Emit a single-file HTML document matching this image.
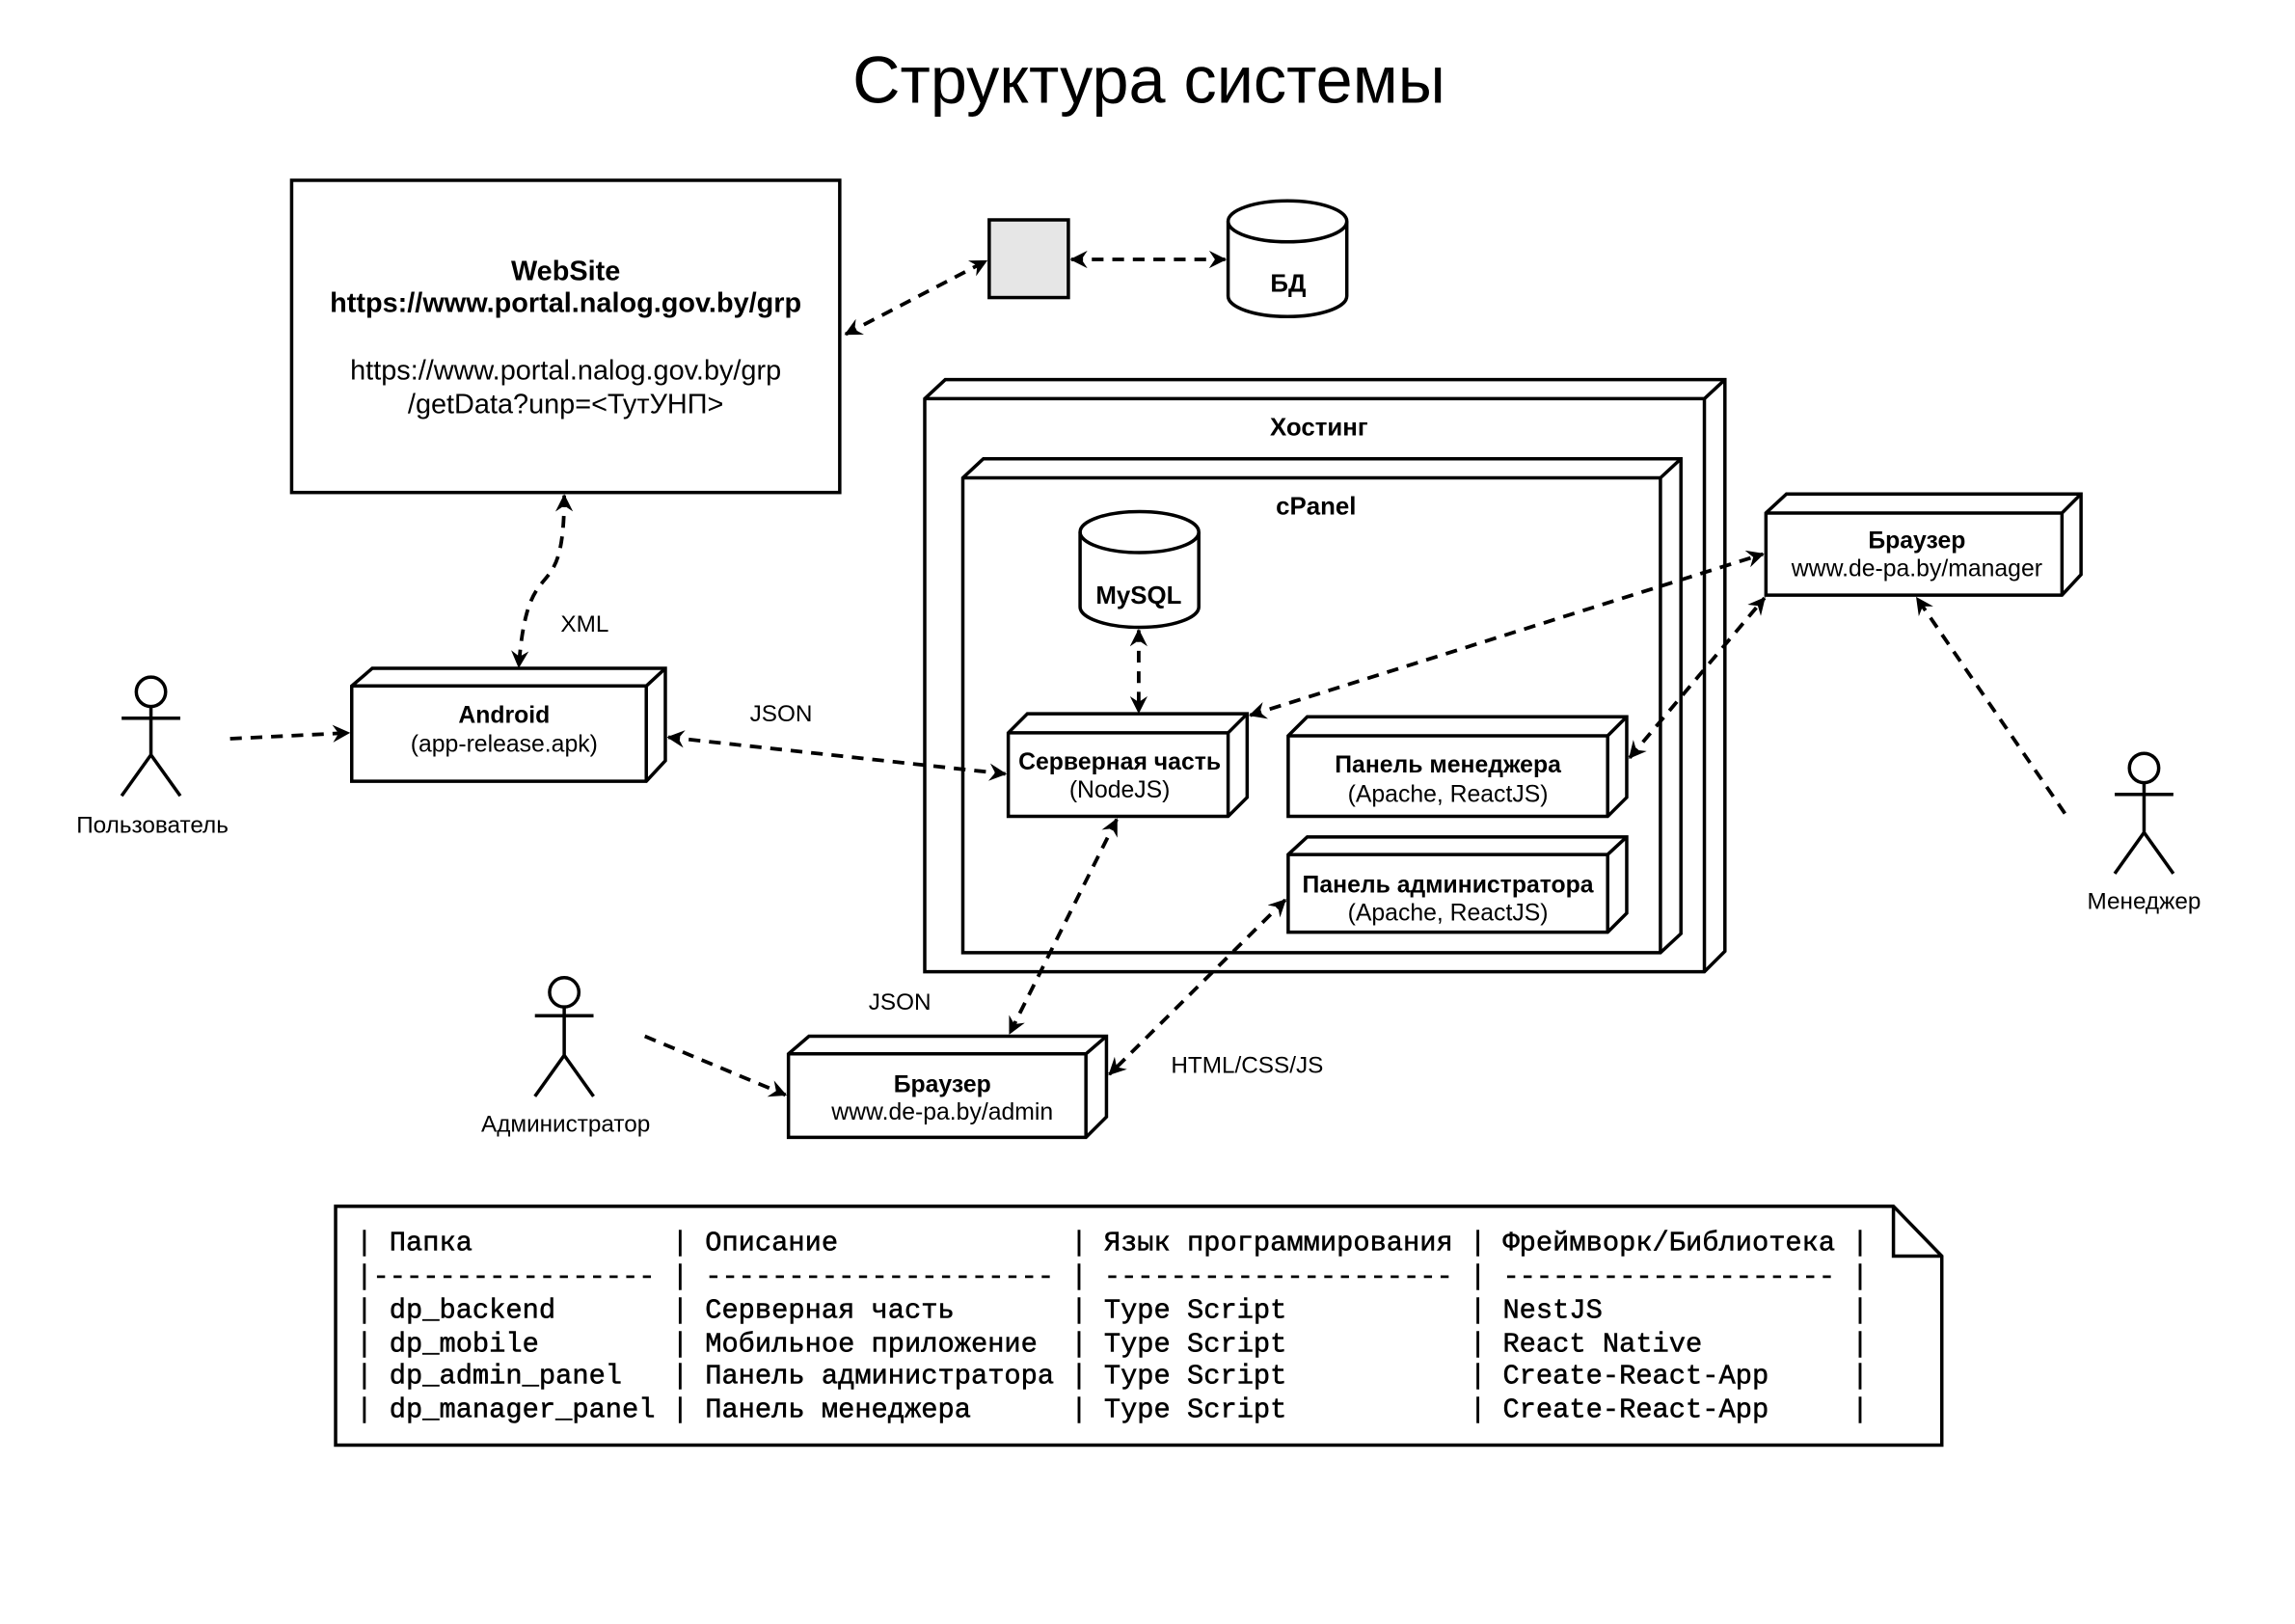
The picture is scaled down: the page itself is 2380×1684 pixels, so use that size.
<!DOCTYPE html>
<html><head><meta charset="utf-8"><style>html,body{margin:0;padding:0;background:#fff}svg{display:block}.pre{white-space:pre}</style></head>
<body>
<svg width="2380" height="1684" viewBox="0 0 1566 1108" xmlns="http://www.w3.org/2000/svg" font-family="'Liberation Sans', Arial, sans-serif">
<defs>
<marker id="a" viewBox="0 0 12 12" refX="11" refY="6" markerWidth="12" markerHeight="12" markerUnits="userSpaceOnUse" orient="auto-start-reverse">
<path d="M0,0 L12,6 L0,12 L4,6 z" fill="#000"/>
</marker>
</defs>
<rect width="1566" height="1108" fill="#fff"/>
<text x="784" y="70" font-size="45" text-anchor="middle">Структура системы</text>

<g fill="none" stroke="#000" stroke-width="2.3">
<rect x="199" y="123" width="374" height="213" fill="#fff"/>
<rect x="675" y="150" width="54" height="53" fill="#e6e6e6"/>
<path d="M838,151 A40.5,14 0 0 1 919,151 L919,202 A40.5,14 0 0 1 838,202 Z" fill="#fff"/>
<path d="M838,151 A40.5,14 0 0 0 919,151"/>
<path d="M631,272 L645,259 L1177,259 L1177,649 L1163,663 L631,663 Z" fill="#fff"/>
<path d="M631,272 L1163,272 L1163,663 M1163,272 L1177,259"/>
<path d="M657,326 L671,313 L1147,313 L1147,637 L1133,650 L657,650 Z" fill="#fff"/>
<path d="M657,326 L1133,326 L1133,650 M1133,326 L1147,313"/>
<path d="M737,363 A40.5,14 0 0 1 818,363 L818,414 A40.5,14 0 0 1 737,414 Z" fill="#fff"/>
<path d="M737,363 A40.5,14 0 0 0 818,363"/>
</g>

<g fill="#fff" stroke="#000" stroke-width="2.3">
<path d="M688,500 L701,487 L851,487 L851,544 L838,557 L688,557 Z"/>
<path d="M688,500 L838,500 L838,557 M838,500 L851,487" fill="none"/>
<path d="M879,502 L892,489 L1110,489 L1110,544 L1097,557 L879,557 Z"/>
<path d="M879,502 L1097,502 L1097,557 M1097,502 L1110,489" fill="none"/>
<path d="M879,583 L892,571 L1110,571 L1110,623 L1097,636 L879,636 Z"/>
<path d="M879,583 L1097,583 L1097,636 M1097,583 L1110,571" fill="none"/>
<path d="M1205,350 L1219,337 L1420,337 L1420,392 L1407,406 L1205,406 Z"/>
<path d="M1205,350 L1407,350 L1407,406 M1407,350 L1420,337" fill="none"/>
<path d="M240,468 L254,456 L454,456 L454,519 L441,533 L240,533 Z"/>
<path d="M240,468 L441,468 L441,533 M441,468 L454,456" fill="none"/>
<path d="M538,719 L552,707 L755,707 L755,762 L741,776 L538,776 Z"/>
<path d="M538,719 L741,719 L741,776 M741,719 L755,707" fill="none"/>
</g>

<g fill="none" stroke="#000" stroke-width="2.3">
<circle cx="103" cy="472" r="10"/><path d="M83,490 H123 M103,482 V515 L83,543 M103,515 L123,543"/>
<circle cx="385" cy="677" r="10"/><path d="M365,693 H405 M385,687 V720 L365,748 M385,720 L405,748"/>
<circle cx="1463" cy="524" r="10"/><path d="M1443,542 H1483 M1463,534 V568 L1443,596 M1463,568 L1483,596"/>
</g>

<g fill="none" stroke="#000" stroke-width="2.5" stroke-dasharray="8,6">
<path d="M577,228 L673,178" marker-start="url(#a)" marker-end="url(#a)"/>
<path d="M731,177 L836,177" marker-start="url(#a)" marker-end="url(#a)"/>
<path d="M385,338 C385,420 360,370 354,455" marker-start="url(#a)" marker-end="url(#a)"/>
<path d="M157,504 L238,500" marker-end="url(#a)"/>
<path d="M456,503 L686,528" marker-start="url(#a)" marker-end="url(#a)"/>
<path d="M777,430 L777,486" marker-start="url(#a)" marker-end="url(#a)"/>
<path d="M853,488 L1203,378" marker-start="url(#a)" marker-end="url(#a)"/>
<path d="M1112,517 L1204,408" marker-start="url(#a)" marker-end="url(#a)"/>
<path d="M1409,555 L1308,408" marker-end="url(#a)"/>
<path d="M762,559 L689,705" marker-start="url(#a)" marker-end="url(#a)"/>
<path d="M877,614 L757,733" marker-start="url(#a)" marker-end="url(#a)"/>
<path d="M440,707 L536,747" marker-end="url(#a)"/>
</g>

<g font-size="19" text-anchor="middle" fill="#000">
<text x="386" y="191" font-weight="bold">WebSite</text>
<text x="386" y="213" font-weight="bold">https://www.portal.nalog.gov.by/grp</text>
<text x="386" y="259">https://www.portal.nalog.gov.by/grp</text>
<text x="386" y="282">/getData?unp=&lt;ТутУНП&gt;</text>
<text x="879" y="199" font-weight="bold" font-size="17">БД</text>
<text x="900" y="297" font-weight="bold" font-size="17">Хостинг</text>
<text x="898" y="351" font-weight="bold" font-size="17">cPanel</text>
<text x="777" y="412" font-weight="bold" font-size="17">MySQL</text>
<text x="764" y="525" font-weight="bold" font-size="16.3">Серверная часть</text>
<text x="764" y="544" font-size="16.3">(NodeJS)</text>
<text x="988" y="527" font-weight="bold" font-size="16.3">Панель менеджера</text>
<text x="988" y="547" font-size="16.3">(Apache, ReactJS)</text>
<text x="988" y="609" font-weight="bold" font-size="16.3">Панель администратора</text>
<text x="988" y="628" font-size="16.3">(Apache, ReactJS)</text>
<text x="1308" y="374" font-weight="bold" font-size="16.3">Браузер</text>
<text x="1308" y="393" font-size="16.3">www.de-pa.by/manager</text>
<text x="344" y="493" font-weight="bold" font-size="16.3">Android</text>
<text x="344" y="513" font-size="16.3">(app-release.apk)</text>
<text x="643" y="745" font-weight="bold" font-size="16.3">Браузер</text>
<text x="643" y="764" font-size="16.3">www.de-pa.by/admin</text>
<text x="104" y="568" font-size="16">Пользователь</text>
<text x="386" y="772" font-size="16">Администратор</text>
<text x="1463" y="620" font-size="16">Менеджер</text>
<text x="399" y="431" font-size="16">XML</text>
<text x="533" y="492" font-size="16">JSON</text>
<text x="614" y="689" font-size="16">JSON</text>
<text x="851" y="732" font-size="16">HTML/CSS/JS</text>
</g>

<path d="M229,823 L1292,823 L1325,857 L1325,986 L229,986 Z" fill="#fff" stroke="#000" stroke-width="2.3"/>
<path d="M1292,823 L1292,857 L1325,857" fill="none" stroke="#000" stroke-width="2.3"/>
<g font-family="'Liberation Mono', 'Courier New', monospace" font-size="18.9" fill="#000" stroke="#000" stroke-width="0.35">
<text class="pre" x="243" y="853">| Папка            | Описание              | Язык программирования | Фреймворк/Библиотека |</text>
<text class="pre" x="243" y="876">|----------------- | --------------------- | --------------------- | -------------------- |</text>
<text class="pre" x="243" y="899">| dp_backend       | Серверная часть       | Type Script           | NestJS               |</text>
<text class="pre" x="243" y="922">| dp_mobile        | Мобильное приложение  | Type Script           | React Native         |</text>
<text class="pre" x="243" y="944">| dp_admin_panel   | Панель администратора | Type Script           | Create-React-App     |</text>
<text class="pre" x="243" y="967">| dp_manager_panel | Панель менеджера      | Type Script           | Create-React-App     |</text>
</g>
</svg>
</body></html>
